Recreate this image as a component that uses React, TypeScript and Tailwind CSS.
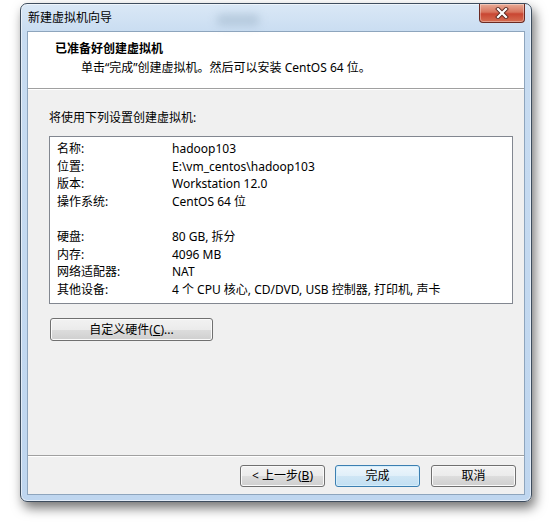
import React from "react";

const rows: [string, string][] = [
  ["名称:", "hadoop103"],
  ["位置:", "E:\\vm_centos\\hadoop103"],
  ["版本:", "Workstation 12.0"],
  ["操作系统:", "CentOS 64 位"],
  ["", ""],
  ["硬盘:", "80 GB, 拆分"],
  ["内存:", "4096 MB"],
  ["网络适配器:", "NAT"],
  ["其他设备:", "4 个 CPU 核心, CD/DVD, USB 控制器, 打印机, 声卡"],
];

function Btn({ children, primary = false }: { children: React.ReactNode; primary?: boolean }) {
  return (
    <div
      className={
        primary
          ? "w-[85px] h-[22px] flex items-center justify-center rounded-[3px] border border-[#3c7fb1] bg-[linear-gradient(180deg,#edf6fc_0%,#e0eff9_50%,#cfe6f5_50%,#c2dff2_100%)] shadow-[inset_0_0_0_1px_#d6eefb] text-[12px] text-black"
          : "w-[85px] h-[22px] flex items-center justify-center rounded-[3px] border border-[#707070] bg-[linear-gradient(180deg,#f2f2f2_0%,#ebebeb_50%,#dddddd_50%,#cfcfcf_100%)] shadow-[inset_0_0_0_1px_#fafafa] text-[12px] text-black"
      }
    >
      {children}
    </div>
  );
}

export default function App() {
  return (
    <div className="w-[557px] h-[531px] bg-white overflow-hidden pt-[3px] font-['Noto_Sans','Noto_Sans_CJK_SC',sans-serif] text-[12px] text-black">
      <div className="relative ml-[20px] w-[512px] h-[499px] rounded-[7px] border border-[#3e4d5e] bg-[linear-gradient(180deg,#dae8f6_0%,#c8dcf1_30px,#bfd6ef_100%)] shadow-[inset_0_0_0_1px_rgba(255,255,255,0.55),3px_6px_12px_rgba(0,0,0,0.55)] flex flex-col px-[7px] pb-[7px]">
        <div className="absolute left-[195px] top-[10px] w-[44px] h-[12px] rounded-full bg-[#9cb3c8] opacity-50 blur-[4px]" />
        <div className="h-[28px] flex justify-between">
          <div className="self-center pb-[1px] text-[12px] leading-[16px] text-black">新建虚拟机向导</div>
          <div className="w-[46px] h-[19px] -mr-[1px] rounded-b-[4px] border border-t-0 border-[#6b2a22] bg-[linear-gradient(180deg,#e8ab96_0%,#d8745d_45%,#c94632_55%,#d66e52_100%)] shadow-[inset_0_0_0_1px_rgba(255,255,255,0.35)] flex items-center justify-center">
            <svg width="14" height="12" viewBox="0 0 14 12">
              <path d="M3 2 L11 10 M11 2 L3 10" stroke="#5a2a22" strokeWidth="4" strokeLinecap="square" />
              <path d="M3 2 L11 10 M11 2 L3 10" stroke="#ffffff" strokeWidth="2.2" strokeLinecap="square" />
            </svg>
          </div>
        </div>
        <div className="flex-1 flex flex-col bg-[#f0f0f0] ring-1 ring-[#8ea5bd]">
          <div className="h-[56px] bg-white pt-[9px]">
            <div className="pl-[27px] font-bold leading-[16px]">已准备好创建虚拟机</div>
            <div className="pl-[53px] mt-[3px] leading-[16px]">单击“完成”创建虚拟机。然后可以安装 CentOS 64 位。</div>
          </div>
          <div className="h-[2px] border-t border-[#a0a0a0] border-b border-b-white" />
          <div className="flex-1 flex flex-col">
            <div className="pl-[21px] mt-[20px] leading-[16px]">将使用下列设置创建虚拟机:</div>
            <div className="ml-[21px] mt-[10px] w-[464px] h-[168px] border border-[#828790] bg-white pt-[3px] pl-[7px]">
              {rows.map(([k, v], i) => (
                <div key={i} className="flex h-[17.6px] leading-[17.6px] whitespace-nowrap">
                  <div className="w-[115px]">{k}</div>
                  <div>{v}</div>
                </div>
              ))}
            </div>
            <div className="ml-[22px] mt-[14px] w-[163px] h-[23px] flex items-center justify-center rounded-[3px] border border-[#707070] bg-[linear-gradient(180deg,#f2f2f2_0%,#ebebeb_50%,#dddddd_50%,#cfcfcf_100%)] shadow-[inset_0_0_0_1px_#fafafa]">
              自定义硬件(<span className="underline">C</span>)...
            </div>
          </div>
          <div className="h-[2px] border-t border-[#a0a0a0] border-b border-b-white" />
          <div className="h-[37px] flex justify-end items-start pt-[8px] pr-[8px] gap-[10px]">
            <Btn>
              &lt; 上一步(<span className="underline">B</span>)
            </Btn>
            <Btn primary>完成</Btn>
            <div className="ml-[1px]">
              <Btn>取消</Btn>
            </div>
          </div>
        </div>
      </div>
    </div>
  );
}
